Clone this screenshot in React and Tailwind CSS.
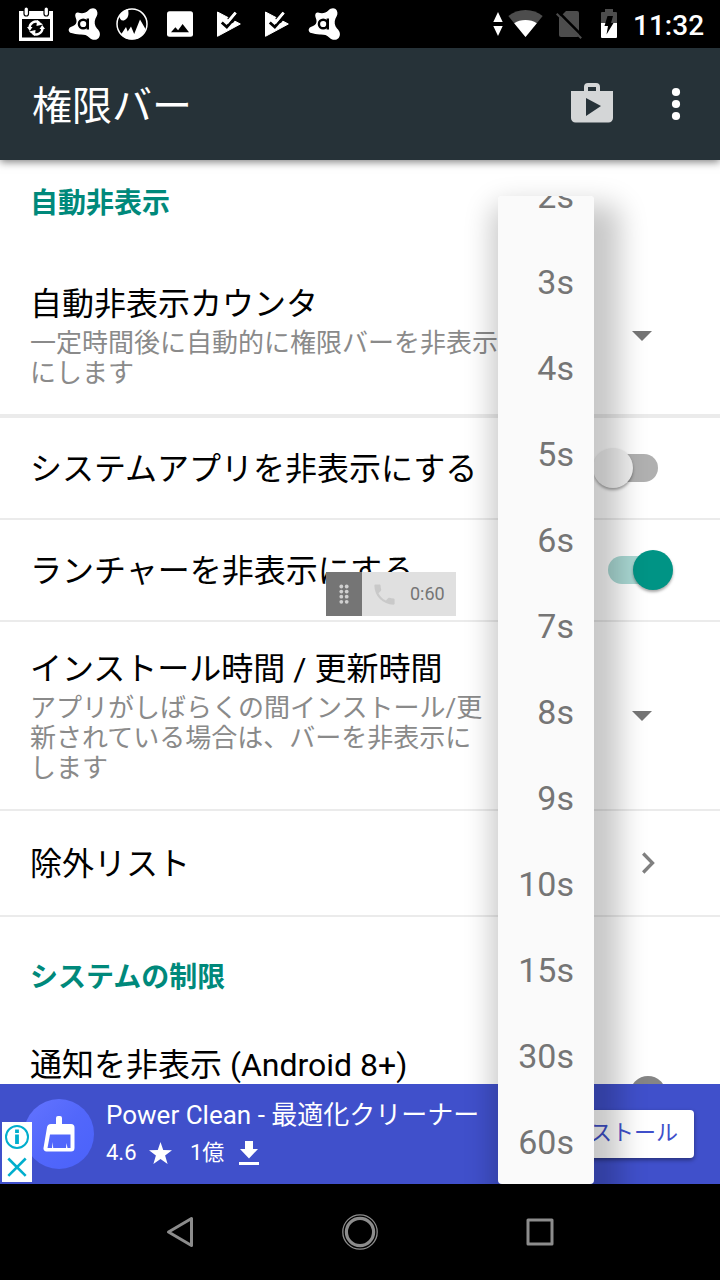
import clsx from 'clsx';

const COUNTER_OPTIONS = ['2s', '3s', '4s', '5s', '6s', '7s', '8s', '9s', '10s', '15s', '30s', '60s'];

function CalendarSyncIcon() {
  return (
    <svg className="w-12 h-12" viewBox="0 0 48 48">
      <path fill="#fff" fillRule="evenodd" d="M7 11h34v30H7zM10 19v18.500h28V19z" />
      <rect x="12" y="7" width="4.500" height="9" rx="2.200" fill="#fff" stroke="#000" strokeWidth="1.200" />
      <rect x="32" y="7" width="4.500" height="9" rx="2.200" fill="#fff" stroke="#000" strokeWidth="1.200" />
      <path fill="none" stroke="#fff" strokeWidth="2.400" d="M17.500 28a6.500 6.500 0 0 1 9.500-5.700M30.500 28a6.500 6.500 0 0 1-9.500 5.700" />
      <path fill="#fff" d="M25 20l6 4.500-6.500 1.500zM23 36l-6-4.500 6.500-1.500zM15 27h5.500l-2.700 4zM33 29h-5.500l2.700-4z" />
    </svg>
  );
}

function AvastIcon() {
  return (
    <svg className="w-12 h-12" viewBox="0 0 48 48">
      <path
        fill="#fff"
        d="M18 12.500c4 1.500 7.500.8 10.300-2C31 7.800 35 7.500 36.800 10.500c1.500 3 .2 5.500-1.300 7.900-1.500 3-1 7.400 1.500 10.200 3 2.700 4 6.300 1.700 9.300-2.600 2.800-6.800 2.300-9.500-.4-2.700-2.400-5-3-9-2.900-3.600.1-6-.9-8.800-1.500-3.400-.9-3.600-4.800-.6-6.100 3.300-1.400 5.300-2.600 5.700-5.100.4-2.700-1.300-4.300-1.300-6.400.1-2.200 1.200-3.300 2.800-3z"
      />
      <circle cx="23.200" cy="24" r="4.300" fill="none" stroke="#000" strokeWidth="2.400" />
      <path stroke="#000" strokeWidth="2.400" d="M27.800 18.500v11" />
    </svg>
  );
}

function LandscapeGlobeIcon() {
  return (
    <svg className="w-12 h-12" viewBox="0 0 48 48">
      <circle cx="24" cy="24" r="15" fill="none" stroke="#fff" strokeWidth="1.500" />
      <path fill="#fff" d="M11.500 15.500c2.500-4 6-6 8.300-6.500 1.700 5.500.2 10-4 11.500-3 .3-4.500-2-4.300-5z" />
      <path fill="#fff" d="M13 34.500l5-7.500 1.700 4.500 3.300-5 3.200 7.500L32 19.500l5.500 9.500C35 36.500 30 39.500 24 39.500c-4.500 0-8.500-2-11-5z" />
    </svg>
  );
}

function ImageIcon() {
  return (
    <svg className="w-12 h-12" viewBox="0 0 48 48">
      <rect x="11" y="11.300" width="26" height="25.400" rx="2.500" fill="#fff" />
      <path d="M15 32.300l4.400-5 2.700 3 4.500-6.300 6.400 8.300z" />
    </svg>
  );
}

function PlayCheckIcon() {
  return (
    <svg className="w-12 h-12" viewBox="0 0 48 48">
      <path fill="#fff" stroke="#fff" strokeLinejoin="round" d="M13.500 12v24.300L36.300 24z" />
      <path fill="none" stroke="#000" strokeWidth="7" d="M26 21l8-10" />
      <path fill="none" stroke="#fff" strokeWidth="3" d="M23 23l8.700-10.300" />
      <path fill="none" stroke="#000" strokeWidth="2.800" d="M17.800 22.500l5 4.500L34 14" />
      <path fill="none" stroke="#fff" strokeWidth="2.500" d="M23 23.300l8.700-10.500" />
    </svg>
  );
}

function StatusBar() {
  return (
    <div className="flex h-12 shrink-0 items-center bg-black pl-3 text-white">
      <CalendarSyncIcon />
      <AvastIcon />
      <LandscapeGlobeIcon />
      <ImageIcon />
      <PlayCheckIcon />
      <PlayCheckIcon />
      <AvastIcon />
      <svg className="ml-36 h-12 w-3" viewBox="0 0 12 48" fill="#fff">
        <path d="M6 12l4.700 10H1.300zM6 36l4.700-10H1.300z" />
      </svg>
      <svg className="ml-1 h-12 w-9" viewBox="0 0 36 48">
        <path fill="#4d4d4d" d="M17.500 37L.3 16C5 12 11 10 17.500 10s12.500 2 17.200 6z" />
        <path fill="#fff" d="M17.500 37L6.200 23.300C9.500 21 13 20 17.500 20s8 1 11.300 3.300z" />
      </svg>
      <svg className="ml-[11px] h-12 w-7" viewBox="0 0 28 48">
        <path fill="#4d4d4d" d="M11 11h11a2 2 0 0 1 2 2v22a2 2 0 0 1-2 2H6a2 2 0 0 1-2-2V18z" />
        <path stroke="#000" strokeWidth="2.500" d="M3 11.500l25 25" />
        <path stroke="#4d4d4d" strokeWidth="2" d="M1.700 13.700l24.500 24.500" />
      </svg>
      <svg className="ml-[17px] h-12 w-[18px]" viewBox="0 0 18 48">
        <path fill="#4d4d4d" d="M1 23V13a1 1 0 0 1 1-1h3V9h8v3h3a1 1 0 0 1 1 1v10z" />
        <path fill="#fff" d="M1 23h16v14a1 1 0 0 1-1 1H2a1 1 0 0 1-1-1z" />
        <path d="M7.500 16h5.500l-2 7h2.500L6.500 34.500 8 26H4.500z" />
      </svg>
      <span className="ml-[15px] pt-[3px] text-[28px] font-medium leading-none">11:32</span>
    </div>
  );
}

function AppBar() {
  return (
    <header className="relative z-10 flex h-28 shrink-0 items-center bg-[#263238] pl-8 text-white shadow-[0_2px_8px_rgba(0,0,0,0.5)]">
      <h1 className="flex-1 pt-1.5 text-[40px] leading-none">権限バー</h1>
      <svg className="mr-12 h-12 w-12" viewBox="0 0 48 48">
        <path
          fill="#d4d6d7"
          fillRule="evenodd"
          d="M16 11V7a4 4 0 0 1 4-4h8a4 4 0 0 1 4 4v4h13v27a4.500 4.500 0 0 1-4.500 4.500h-33A4.500 4.500 0 0 1 3 38V11zM20 7v4h8V7zM18 18v18l15-10z"
        />
      </svg>
      <svg className="mr-8 h-12 w-6" viewBox="0 0 24 48" fill="#fff">
        <circle cx="12" cy="12" r="4.100" />
        <circle cx="12" cy="24" r="4.100" />
        <circle cx="12" cy="36" r="4.100" />
      </svg>
    </header>
  );
}

function Caret() {
  return (
    <svg className="mr-[68px] h-2.5 w-5" viewBox="0 0 20 10" fill="#757575">
      <path d="M0 0h20L10 10z" />
    </svg>
  );
}

function Switch({ on }) {
  return (
    <div className="mr-[47px] flex h-10 w-20 items-center">
      <div className={clsx('mx-auto flex h-7 w-[50px] items-center rounded-full', on ? 'justify-end bg-[#aad9d4]' : 'justify-start bg-[#b0b0b0]')}>
        <div
          className={clsx(
            'h-10 w-10 shrink-0 rounded-full shadow-[0_2px_3px_rgba(0,0,0,0.35)]',
            on ? '-mr-[15px] bg-[#009485]' : '-ml-[15px] bg-[#f1f1f1]'
          )}
        />
      </div>
    </div>
  );
}

function SettingRow({ title, desc, className, textClassName = 'pt-0.5', children }) {
  return (
    <div className={clsx('flex items-center border-[#ebebeb] pl-[30px]', className)}>
      <div className={clsx('w-[472px]', textClassName)}>
        <div className="whitespace-nowrap text-[32px] leading-[48px] text-black">{title}</div>
        {desc && <div className="whitespace-pre-line text-[26px] leading-[30px] text-[#8a8a8a]">{desc}</div>}
      </div>
      <div className="ml-auto">{children}</div>
    </div>
  );
}

function SectionTitle({ className, children }) {
  return <h2 className={clsx('flex items-center pl-[30px] pt-1 text-[28px] font-bold text-[#00897b]', className)}>{children}</h2>;
}

// Floating permission bar preview shown over the settings list
function FloatingBar() {
  return (
    <div className="absolute left-[326px] top-[572px] z-20 flex h-11 w-[130px]">
      <div className="flex w-9 items-center justify-center bg-[#757575]">
        <svg className="h-6 w-3" viewBox="0 0 12 24" fill="#d0d0d0">
          {[4.500, 9.600, 14.700, 19.800].map((y) => (
            <g key={y}>
              <circle cx="3.300" cy={y} r="1.900" />
              <circle cx="8.700" cy={y} r="1.900" />
            </g>
          ))}
        </svg>
      </div>
      <div className="flex flex-1 items-center bg-[#e0e0e0] pl-[9px]">
        <svg className="h-[27px] w-[27px]" viewBox="0 0 24 24" fill="#c9c9c9">
          <path d="M6.620 10.790c1.440 2.830 3.760 5.140 6.590 6.590l2.200-2.200c.27-.27.67-.36 1.020-.24 1.120.37 2.330.57 3.570.57.55 0 1 .45 1 1V20c0 .55-.45 1-1 1-9.390 0-17-7.610-17-17 0-.55.45-1 1-1h3.500c.55 0 1 .45 1 1 0 1.250.2 2.450.57 3.570.11.35.03.74-.25 1.020l-2.200 2.200z" />
        </svg>
        <span className="ml-3 text-[18px] leading-none text-[#757575]">0:60</span>
      </div>
    </div>
  );
}

function CounterMenu() {
  return (
    <ul className="absolute left-[498px] top-[196px] z-30 h-[988px] w-24 overflow-hidden rounded bg-[#fafafa]">
      {COUNTER_OPTIONS.map((option) => (
        <li key={option} className="flex h-[86px] items-center justify-end pr-5 text-[34px] text-[#757575] first:-mt-[43px]">
          {option}
        </li>
      ))}
    </ul>
  );
}

function AdBanner() {
  return (
    <div className="relative flex h-[100px] shrink-0 items-center bg-[#4050cb] pl-6 text-white">
      <div className="flex h-[70px] w-[70px] items-center justify-center rounded-full bg-gradient-to-br from-[#6474ff] via-[#5267fb] to-[#4a62fb]">
        <svg className="h-9 w-8" viewBox="0 0 32 36">
          <path
            fill="#fff"
            fillRule="evenodd"
            d="M13 2a2 2 0 0 1 2-2h2a2 2 0 0 1 2 2v6h9a3.500 3.500 0 0 1 3.500 3.500V32a3.500 3.500 0 0 1-3.500 3.500H3.500A3 3 0 0 1 .5 32L4 11.500A4 4 0 0 1 8 8h5zM7 18.500L4.500 32H9l.7-6 .5 6H23l.5-5 1 5h3V18.500z"
          />
        </svg>
      </div>
      <div className="ml-3">
        <div className="whitespace-nowrap text-[26px] leading-[38px]">Power Clean - 最適化クリーナー</div>
        <div className="flex items-center text-[22px] leading-[38px]">
          <span className="w-[43px]">4.6</span>
          <svg className="h-[22px] w-[23px]" viewBox="0 0 22 21" fill="#fff">
            <path d="M11 0l2.600 7.600 8.400.3-6.600 4.900L17.800 21 11 16.200 4.200 21l2.400-8.200L0 7.900l8.400-.3z" />
          </svg>
          <span className="ml-[18px]">1億</span>
          <svg className="ml-[15px] h-6 w-5" viewBox="0 0 20 24" fill="#fff">
            <path d="M6 0h8v8h5l-9 9.500L1 8h5zM0 21h20v3H0z" />
          </svg>
        </div>
      </div>
      <button className="ml-auto mr-[26px] h-12 whitespace-nowrap rounded bg-white px-4 pb-[3px] text-[22px] leading-none text-[#4050cb] shadow-[0_2px_4px_rgba(0,0,0,0.4)]">
        インストール
      </button>
      <div className="absolute bottom-[2px] left-[2px] flex h-[60px] w-[30px] flex-col items-center bg-white">
        <svg className="h-[60px] w-[30px]" viewBox="0 0 30 60" fill="none" stroke="#00aecd">
          <circle cx="15" cy="15" r="11" strokeWidth="2" />
          <path strokeWidth="3.800" d="M15 12.500V22M15 7.500v3.500" />
          <path strokeWidth="2.600" d="M6.300 36.500l17.400 17.300M23.700 36.500L6.300 53.800" />
        </svg>
      </div>
    </div>
  );
}

function NavBar() {
  return (
    <nav className="relative z-40 flex h-24 shrink-0 items-center justify-center gap-[132px] bg-black">
      <svg className="h-12 w-12" viewBox="0 0 48 48" fill="none" stroke="#8c8c8c" strokeWidth="3" strokeLinejoin="round">
        <path d="M35.500 10.500v27L12.500 24z" />
      </svg>
      <svg className="h-12 w-12" viewBox="0 0 48 48" fill="none" stroke="#8c8c8c">
        <circle cx="24" cy="24" r="17.200" strokeWidth="1.300" />
        <circle cx="24" cy="24" r="13.600" strokeWidth="3.200" />
      </svg>
      <svg className="h-12 w-12" viewBox="0 0 48 48" fill="none" stroke="#8c8c8c" strokeWidth="3" strokeLinejoin="round">
        <path d="M12 12h24v24H12z" />
      </svg>
    </nav>
  );
}

function App() {
  return (
    <div lang="ja" className="relative flex h-[1280px] w-[720px] flex-col overflow-hidden bg-white font-['Roboto','Noto_Sans_CJK_JP',sans-serif]">
      <StatusBar />
      <AppBar />
      <main className="min-h-0 flex-1 overflow-hidden">
        <SectionTitle className="mb-3.5 h-[84px]">自動非表示</SectionTitle>
        <SettingRow
          className="h-40 border-b-4"
          textClassName="pb-[5px]"
          title="自動非表示カウンタ"
          desc="一定時間後に自動的に権限バーを非表示にします"
        >
          <Caret />
        </SettingRow>
        <SettingRow className="h-[102px] border-b-2" title="システムアプリを非表示にする">
          <Switch />
        </SettingRow>
        <SettingRow className="h-[102px] border-b-2" title="ランチャーを非表示にする">
          <Switch on />
        </SettingRow>
        <SettingRow
          className="h-[189px] border-b-2"
          textClassName="pb-[3px]"
          title="インストール時間 / 更新時間"
          desc={'アプリがしばらくの間インストール/更新されている場合は、バーを非表示に\nします'}
        >
          <Caret />
        </SettingRow>
        <SettingRow className="h-[106px] border-b-2" title="除外リスト">
          <svg className="mr-[64px] h-6 w-4" viewBox="0 0 16 24" fill="none" stroke="#808080" strokeWidth="3.300">
            <path d="M3.200 2.500l9.300 9.500-9.300 9.500" />
          </svg>
        </SettingRow>
        <SectionTitle className="h-[118px]">システムの制限</SectionTitle>
        <div className="flex items-start pl-[30px]">
          <div className="mt-1.5 text-[32px] leading-[48px] text-black">通知を非表示 (Android 8+)</div>
          <div className="ml-auto mr-[54px] mt-[41px] h-9 w-9 rounded-full bg-[#858585]" />
        </div>
      </main>
      <AdBanner />
      <div className="absolute left-[498px] top-[196px] z-[25] h-[988px] w-24 rounded shadow-[10px_24px_28px_16px_rgba(0,0,0,0.22)]" />
      <FloatingBar />
      <CounterMenu />
      <NavBar />
    </div>
  );
}

export default App;
